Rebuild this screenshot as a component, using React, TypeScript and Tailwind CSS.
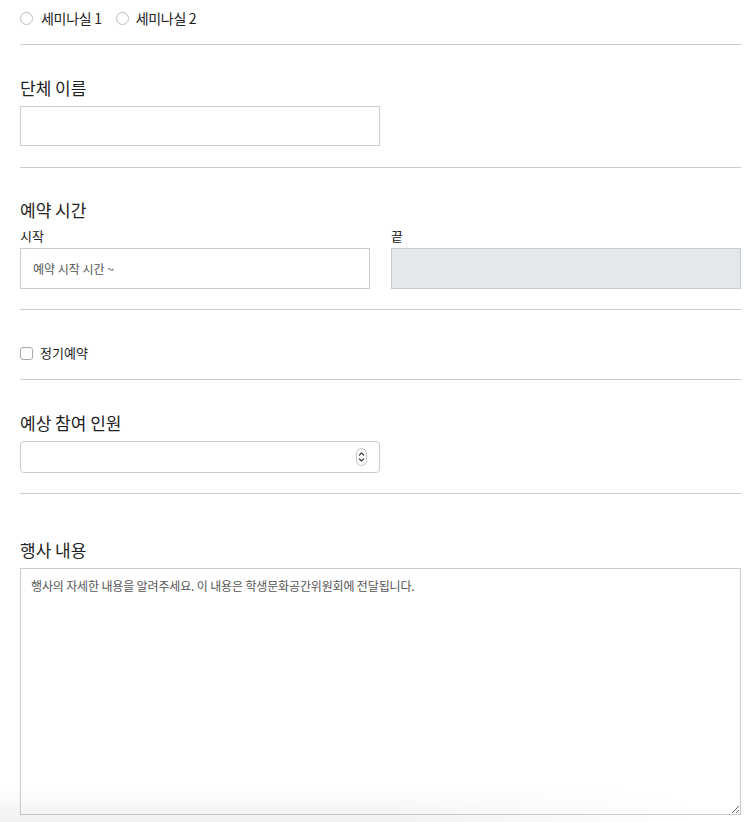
import React from 'react';

const font = { fontFamily: '"Noto Sans CJK KR", "Noto Sans", sans-serif' };

const Divider = () => <div className="h-px bg-[#cccccc]" />;

const SectionTitle: React.FC<{ children: React.ReactNode; className?: string }> = ({ children, className }) => (
    <h2 className={`text-[17px] leading-[24px] text-[#222] ${className ?? ''}`}>{children}</h2>
);

const App: React.FC = () => {
    return (
        <div className="min-h-screen bg-white pl-5 pr-[9px] text-[#222]" style={font}>
            {/* room select */}
            <div className="h-[36px] flex items-center gap-[14px] text-[14px] tracking-[-0.3px]">
                <label className="flex items-center gap-[8px]">
                    <input type="radio" name="room" className="appearance-none w-[13px] h-[13px] rounded-full border border-[#bdbdbd] bg-white" />
                    <span>세미나실 1</span>
                </label>
                <label className="flex items-center gap-[7px]">
                    <input type="radio" name="room" className="appearance-none w-[13px] h-[13px] rounded-full border border-[#bdbdbd] bg-white" />
                    <span>세미나실 2</span>
                </label>
            </div>
            <div className="mt-[8px]"><Divider /></div>

            {/* group name */}
            <SectionTitle className="mt-[31px]">단체 이름</SectionTitle>
            <input type="text" className="mt-[6px] block w-[360px] h-[40px] border border-[#c8cdd4] bg-white outline-none px-3 text-[13px]" />
            <div className="mt-[21px]"><Divider /></div>

            {/* reservation time */}
            <SectionTitle className="mt-[30px]">예약 시간</SectionTitle>
            <div className="mt-[4px] grid grid-cols-2 gap-[21px]">
                <div>
                    <label className="block text-[13px] leading-[20px]">시작</label>
                    <input
                        type="text"
                        placeholder="예약 시작 시간 ~"
                        className="mt-[2px] block w-full h-[41px] border border-[#c8cdd4] bg-white px-3 text-[12px] outline-none placeholder:text-[#555]"
                    />
                </div>
                <div>
                    <label className="block text-[13px] leading-[20px]">끝</label>
                    <input
                        type="text"
                        disabled
                        className="mt-[2px] block w-full h-[41px] border border-[#c8cdd4] bg-[#e5e8eb] px-3 text-[12px] outline-none"
                    />
                </div>
            </div>
            <div className="mt-[20px]"><Divider /></div>

            {/* recurring */}
            <div className="pt-[33px] pb-[16px]">
                <label className="flex items-center gap-[7px] h-[20px] text-[13px]">
                    <input type="checkbox" className="appearance-none w-[13px] h-[13px] rounded-[3px] border border-[#a9a9a9] bg-white" />
                    <span>정기예약</span>
                </label>
            </div>
            <Divider />

            {/* expected people */}
            <SectionTitle className="mt-[31px]">예상 참여 인원</SectionTitle>
            <div className="relative mt-[6px] w-[360px]">
                <input
                    type="text"
                    inputMode="numeric"
                    className="block w-full h-[32px] rounded-[4px] border border-[#c8cdd4] bg-white px-3 text-[13px] outline-none"
                />
                <svg className="absolute right-[13px] top-[7px]" width="11" height="18" viewBox="0 0 11 18" fill="none">
                    <rect x="0.5" y="0.5" width="10" height="17" rx="5" stroke="#c4c4c4" fill="#fafafa" />
                    <path d="M3.3 7.2 L5.5 5 L7.7 7.2" stroke="#333" strokeWidth="1.1" strokeLinecap="round" strokeLinejoin="round" />
                    <path d="M3.3 10.8 L5.5 13 L7.7 10.8" stroke="#333" strokeWidth="1.1" strokeLinecap="round" strokeLinejoin="round" />
                </svg>
            </div>
            <div className="mt-[20px]"><Divider /></div>

            {/* description */}
            <SectionTitle className="mt-[44px]">행사 내용</SectionTitle>
            <textarea
                placeholder="행사의 자세한 내용을 알려주세요. 이 내용은 학생문화공간위원회에 전달됩니다."
                className="mt-[6px] block w-full h-[247px] border border-[#c8cdd4] bg-white px-[10px] py-[9px] text-[12px] leading-[16px] tracking-[-0.15px] outline-none placeholder:text-[#555]"
            />
            <div className="h-[40px]" />

            {/* bottom fade */}
            <div className="pointer-events-none fixed bottom-0 left-0 w-[700px] h-[36px] bg-[linear-gradient(to_top,rgba(0,0,0,0.055),rgba(0,0,0,0))] [mask-image:linear-gradient(to_right,black_55%,transparent)]" />
        </div>
    );
};

export default App;
